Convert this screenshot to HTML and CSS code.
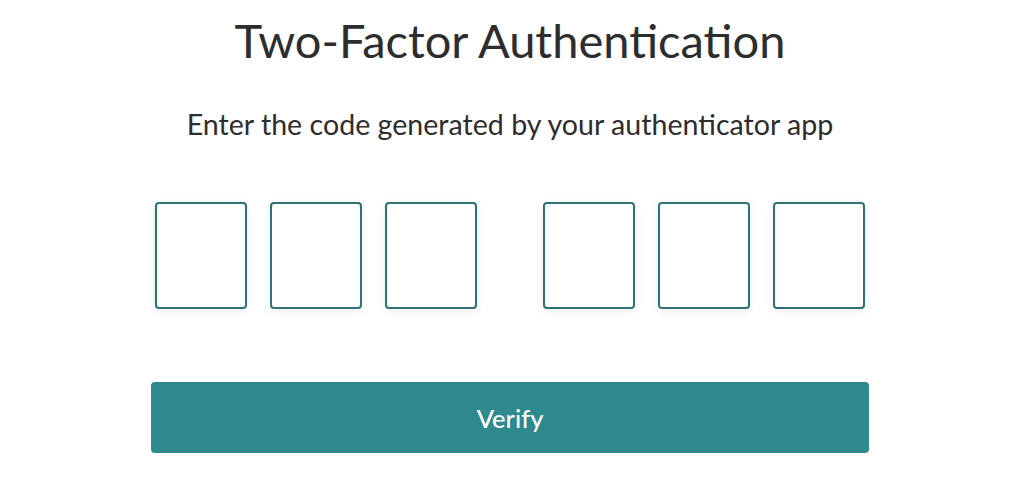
FILE: index.html
```html
<!DOCTYPE html>
<html lang="en">
<head>
<meta charset="utf-8">
<title>Two-Factor Authentication</title>
<link rel="stylesheet" href="styles.css">
</head>
<body>
<main class="card">
  <h1 class="title">Two-Factor Authentication</h1>
  <p class="subtitle">Enter the code generated by your authenticator app</p>
  <form class="form">
    <div class="code">
      <div class="group">
        <input class="digit" type="text" maxlength="1" aria-label="Digit 1">
        <input class="digit" type="text" maxlength="1" aria-label="Digit 2">
        <input class="digit" type="text" maxlength="1" aria-label="Digit 3">
      </div>
      <div class="group">
        <input class="digit" type="text" maxlength="1" aria-label="Digit 4">
        <input class="digit" type="text" maxlength="1" aria-label="Digit 5">
        <input class="digit" type="text" maxlength="1" aria-label="Digit 6">
      </div>
    </div>
    <button class="verify" type="button">Verify</button>
  </form>
</main>
</body>
</html>
```

FILE: styles.css
```css
html, body {
  margin: 0;
  padding: 0;
  background: #ffffff;
}
body {
  font-family: Lato, "Open Sans", sans-serif;
  color: #2b2b2b;
  padding-right: 4px;
}
.card {
  width: 718px;
  margin: 0 auto;
  display: flex;
  flex-direction: column;
  align-items: center;
}
.title {
  margin: 12px 0 0;
  font-size: 47px;
  font-weight: 400;
  line-height: 56px;
  color: #2d2d2d;
  white-space: nowrap;
}
.subtitle {
  margin: 39px 0 0;
  font-size: 28.6px;
  line-height: 34px;
  color: #2d2d2d;
  white-space: nowrap;
}
.form {
  width: 100%;
  display: flex;
  flex-direction: column;
  align-items: center;
}
.code {
  margin-top: 61px;
  display: flex;
  gap: 66px;
}
.group {
  display: flex;
  gap: 23px;
}
.digit {
  box-sizing: border-box;
  width: 92px;
  height: 107px;
  border: 2px solid #2f7176;
  border-radius: 4px;
  background: #fff;
  box-shadow: 0 2px 10px rgba(0, 0, 0, 0.08);
  padding: 0;
  margin: 0;
  font: 400 40px Lato, sans-serif;
  text-align: center;
  outline: none;
}
.verify {
  margin-top: 73px;
  width: 718px;
  height: 71px;
  border: none;
  border-radius: 4px;
  background: #2e8a8f;
  color: #ffffff;
  font: 500 25.5px Lato, sans-serif;
  cursor: pointer;
}
```
